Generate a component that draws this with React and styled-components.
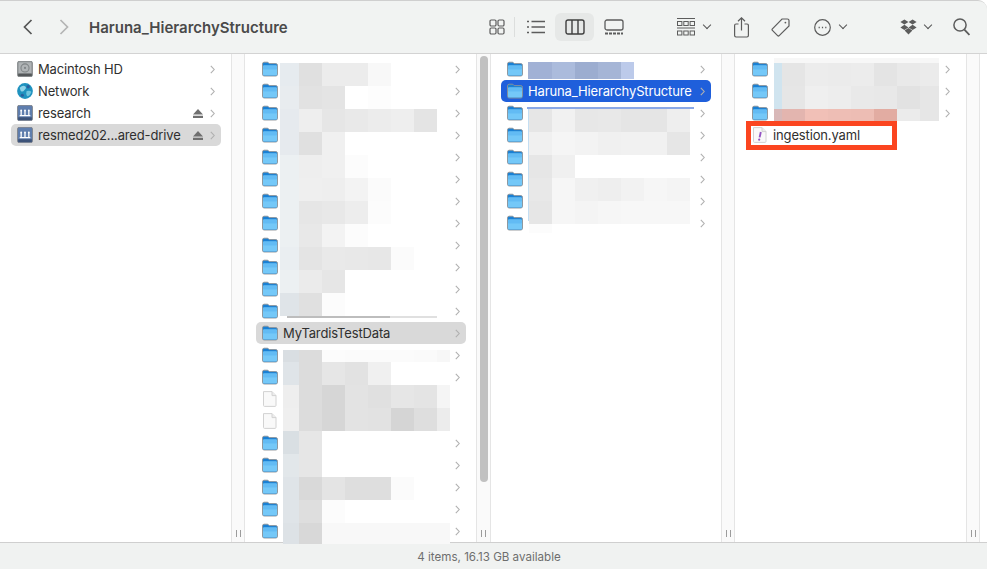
import React from "react";
import styled, { createGlobalStyle } from "styled-components";

const Global = createGlobalStyle`
  html, body { margin: 0; padding: 0; background: #fff; }
  body { font-family: "Inter", "Liberation Sans", sans-serif; }
`;

const GREY = "#5c5c5c";

const Chevron = () => (
  <ChevronWrap viewBox="0 0 5 9">
    <path d="M0.8 0.8 L4.2 4.5 L0.8 8.2" fill="none" stroke="currentColor" strokeWidth="1.1" />
  </ChevronWrap>
);

const Folder = () => (
  <IconBox viewBox="0 0 16 15">
    <path d="M0.5 2.4 Q0.5 0.7 2.2 0.7 H5.8 L7.2 2.1 H13.8 Q15.5 2.1 15.5 3.8 V12.8 Q15.5 14.5 13.8 14.5 H2.2 Q0.5 14.5 0.5 12.8 Z" fill="#1a80d4" stroke="#8f9396" strokeWidth="0.9" />
    <rect x="1" y="4" width="14" height="10" rx="1" fill="#74c8f8" />
    <rect x="1" y="4" width="14" height="4" rx="1" fill="#62bbf4" />
  </IconBox>
);

const Doc = ({ yaml }) => (
  <IconBox viewBox="0 0 16 16">
    <path d="M1.5 0.6 H10 L14 4.6 V14.4 Q14 15.4 13 15.4 H2.5 Q1.5 15.4 1.5 14.4 Z" fill="#f9f9f9" stroke="#d2d2d2" />
    <path d="M10 0.6 V4.6 H14" fill="#ececec" stroke="#d2d2d2" />
    {yaml && (
      <>
        <path d="M8.8 5 L7.6 10.4" stroke="#9454c4" strokeWidth="1.9" />
        <circle cx="7.2" cy="12.7" r="1.1" fill="#9454c4" />
      </>
    )}
  </IconBox>
);

const Disk = () => (
  <IconBox viewBox="0.5 0.5 15 15">
    <rect x="1" y="0.8" width="14" height="14.4" rx="1.5" fill="#8f9496" stroke="#6d7173" strokeWidth="0.6" />
    <rect x="2" y="1.8" width="12" height="10" fill="#b0b4b6" />
    <circle cx="8" cy="7" r="3.8" fill="none" stroke="#7f8486" />
    <circle cx="8" cy="7" r="1" fill="#7f8486" />
    <rect x="1.6" y="12.4" width="12.8" height="2.2" fill="#54585a" />
  </IconBox>
);

const Globe = () => (
  <IconBox viewBox="0.5 0.5 15 15">
    <circle cx="8" cy="8" r="7.4" fill="#1f92bf" />
    <path d="M3 5 Q6 2 8 3.5 Q10 5 7.5 7 Q6 9.5 4 8 Z" fill="#8fd3e8" />
    <path d="M9.5 8 Q13 7 14 9 Q12.5 13 10 13 Q8.5 11 9.5 8 Z" fill="#6ec4de" />
    <circle cx="11" cy="4" r="1.6" fill="#2a5f9e" />
    <circle cx="5.5" cy="12" r="1.5" fill="#2a5f9e" />
  </IconBox>
);

const Server = () => (
  <IconBox viewBox="0.5 0.5 15 15">
    <rect x="1" y="0.8" width="14" height="14.4" rx="1.6" fill="#5f7eae" stroke="#7c8086" strokeWidth="0.8" />
    <rect x="1.6" y="12" width="12.8" height="2.6" fill="#3c5278" />
    <path d="M4.4 6 V10 M8 6 V10 M11.6 6 V10 M3 10.4 H13" stroke="#fff" strokeWidth="1.2" />
    <circle cx="4.4" cy="5.6" r="0.9" fill="#fff" />
    <circle cx="8" cy="5.6" r="0.9" fill="#fff" />
    <circle cx="11.6" cy="5.6" r="0.9" fill="#fff" />
  </IconBox>
);

const Eject = () => (
  <EjectIcon viewBox="0 0 10 9">
    <path d="M5 0 L10 5.4 H0 Z M0 6.8 H10 V9 H0 Z" fill="#6f6f6f" />
  </EjectIcon>
);

const Row = ({ icon, label, sel, eject, noChevron }) => (
  <RowBox $sel={sel}>
    {icon}
    <Label>{label}</Label>
    {eject && <Eject />}
    {!noChevron && <Chevron />}
  </RowBox>
);

const Mosaic = ({ left, top, cols, rows, cells }) => (
  <MosaicGrid $left={left} $top={top} $cols={cols} $rows={rows}>
    {cells.flat().map((c, i) => (
      <Cell key={i} $c={c} />
    ))}
  </MosaicGrid>
);

const W = "#fff";
const sevenCols = "19px 23px 23px 23px 23px 23px 23px";
const eightCols = "16px 23px 23px 23px 23px 23px 23px 13px";

const upperCells = [
  ["#e6ebef", "#e0e0e0", "#ececec", "#ececec", "#f8f8f8", W, W],
  ["#e8ecef", "#e2e2e2", "#e4e4e4", W, "#fdfdfd", W, W],
  ["#e6eaee", "#eeeeee", "#e6e6e6", "#e9e9e9", "#ececec", "#eeeeee", "#e4e4e4"],
  ["#e6eaee", "#e0e0e0", "#f0f0f0", W, W, W, W],
  ["#ecf0f2", "#eeeeee", "#f0f0f0", "#fcfcfc", W, W, W],
  ["#ecf0f2", "#efefef", "#eeeeee", "#f3f3f3", "#fbfbfb", W, W],
  ["#ecf0f2", "#e6e6e6", "#e8e8e8", "#ededed", "#fcfcfc", W, W],
  ["#ecf0f2", "#e8e8e8", "#f3f3f3", "#fcfcfc", W, W, W],
  ["#eaeef1", "#e4e4e4", "#e9e9e9", "#e8e8e8", "#e7e7e7", "#fbfbfb", W],
  ["#ecf0f2", "#ebebeb", "#e6e6e6", W, W, W, W],
  ["#dfe4e8", "#e0e0e0", "#fcfcfc", W, W, W, W],
];

const lowerCells = [
  ["#d9dee2", "#dcdcdc", "#fcfcfc", "#fbfbfb", "#fbfbfb", "#fbfbfb", "#fafafa", "#f7f7f7"],
  ["#dfe4e8", "#dcdcdc", "#e6e6e6", "#e2e2e2", "#f0f0f0", W, W, W],
  ["#eeeeee", "#dcdcdc", "#d6d6d6", "#e3e3e3", "#e0e0e0", "#e6e6e6", "#e4e4e4", "#f5f5f5"],
  ["#efefef", "#dcdcdc", "#d6d6d6", "#e3e3e3", "#e2e2e2", "#d5d5d5", "#dedede", "#ececec"],
  ["#d9dfe3", "#e6e6e6", W, W, W, W, W, W],
  ["#e2e7ea", "#e6e6e6", W, W, W, W, W, W],
  ["#dfe4e8", "#d9d9d9", "#e4e4e4", "#dedede", "#dedede", "#fbfbfb", W, W],
  ["#dfe4e8", "#dedede", "#fcfcfc", W, W, W, W, W],
  ["#dde2e6", "#d8d8d8", "#f8f8f8", "#f8f8f8", "#f8f8f8", "#f8f8f8", "#f8f8f8", "#f8f8f8"],
];

const thirdTop = [["#a1b1d5", "#abbbdc", "#9cadd0", "#a5b5d6", "#bccaea"]];

const thirdCells = [
  ["#e6e6e6", "#f1f1f1", "#e7e7e7", "#e8e8e8", "#e5e5e5", "#e5e5e5", "#eeeeee"],
  ["#f0f0f0", "#f5f5f5", "#f3f3f3", "#f0f0f0", "#f1f1f1", "#f1f1f1", "#e6e6e6"],
  ["#e6e6e6", "#f0f0f0", W, W, W, W, W],
  ["#e8e8e8", "#f6f6f6", "#f0f0f0", "#eeeeee", "#f2f2f2", "#f6f6f6", "#f4f4f4"],
  ["#e6e6e6", "#f6f6f6", "#f4f4f4", "#f6f6f6", "#f7f7f7", "#f7f7f7", "#f7f7f7"],
  ["#fcfcfc", W, W, W, W, W, W],
];

const fourthCells = [
  ["#f7f7f7", "#f7f7f7", "#f7f7f7", "#f7f7f7", "#f7f7f7", "#f7f7f7", "#f7f7f7", "#f7f7f7"],
  ["#d0e4ef", "#e5e5e5", "#ececec", "#ebebeb", "#ececec", "#e4e4e4", "#e9e9e9", "#ebebeb"],
  ["#d0e4ef", "#e6e6e6", "#efefef", "#ededed", "#e9e9e9", "#e8e8e8", "#e2e2e2", "#e6e6e6"],
  ["#d8b8b8", "#e3b5af", "#f1c0b7", "#eebeb5", "#edbdb4", "#e2aca2", "#ebebeb", "#e6e6e6"],
];

const secondColumn = [
  ...Array(12).fill({ kind: "folder" }),
  { kind: "folder", label: "MyTardisTestData", sel: "grey" },
  { kind: "folder" },
  { kind: "folder" },
  { kind: "doc" },
  { kind: "doc" },
  ...Array(5).fill({ kind: "folder" }),
];

const App = () => (
  <Window>
    <Global />
    <Toolbar>
      <NavButton>
        <svg width="10" height="16" viewBox="0 0 10 16">
          <path d="M8.5 1 L1.5 8 L8.5 15" fill="none" stroke="#555" strokeWidth="1.7" />
        </svg>
      </NavButton>
      <NavButton $next>
        <svg width="10" height="16" viewBox="0 0 10 16">
          <path d="M1.5 1 L8.5 8 L1.5 15" fill="none" stroke="#b4b4b4" strokeWidth="1.7" />
        </svg>
      </NavButton>
      <Title>Haruna_HierarchyStructure</Title>
      <Tools>
        <ViewSwitcher>
          <ViewButton $divider>
            <svg width="16" height="16" viewBox="0 0 16 16" fill="none" stroke={GREY} strokeWidth="1.2">
              <rect x="1" y="1" width="6" height="6" rx="1.2" />
              <rect x="9" y="1" width="6" height="6" rx="1.2" />
              <rect x="1" y="9" width="6" height="6" rx="1.2" />
              <rect x="9" y="9" width="6" height="6" rx="1.2" />
            </svg>
          </ViewButton>
          <ViewButton>
            <svg width="18" height="14" viewBox="0 0 18 14" stroke={GREY} strokeWidth="1.4">
              <path d="M0 1.5 H2 M0 7 H2 M0 12.5 H2 M4.5 1.5 H18 M4.5 7 H18 M4.5 12.5 H18" />
            </svg>
          </ViewButton>
          <ViewButton $active>
            <svg width="20" height="16" viewBox="0 0 20 16" fill="none" stroke="#3f3f3f" strokeWidth="1.4">
              <rect x="1" y="1" width="18" height="14" rx="2" />
              <path d="M7 1 V15 M13 1 V15" />
            </svg>
          </ViewButton>
          <ViewButton>
            <svg width="20" height="16" viewBox="0 0 20 16" fill="none" stroke={GREY} strokeWidth="1.3">
              <rect x="1" y="1" width="18" height="10" rx="2" />
              <path d="M1 14.5 H19" strokeWidth="2" strokeDasharray="3 1" />
            </svg>
          </ViewButton>
        </ViewSwitcher>
        <ToolIcon $ml={44}>
          <svg width="18" height="18" viewBox="0 0 18 18" fill="none" stroke={GREY} strokeWidth="1">
            <path d="M0 0.5 H18 M0 10 H18" />
            <rect x="0.5" y="3.5" width="4.4" height="4" />
            <rect x="6.8" y="3.5" width="4.4" height="4" />
            <rect x="13.1" y="3.5" width="4.4" height="4" />
            <rect x="0.5" y="13" width="4.4" height="4" />
            <rect x="6.8" y="13" width="4.4" height="4" />
            <rect x="13.1" y="13" width="4.4" height="4" />
          </svg>
        </ToolIcon>
        <DropCaret $ml={7} />
        <ToolIcon $ml={23}>
          <svg width="15" height="21" viewBox="0 0 15 21" fill="none" stroke={GREY} strokeWidth="1.2">
            <path d="M4.5 7 H2 Q0.6 7 0.6 8.4 V18.6 Q0.6 20 2 20 H13 Q14.4 20 14.4 18.6 V8.4 Q14.4 7 13 7 H10.5" />
            <path d="M7.5 13.5 V1 M4 4.2 L7.5 0.8 L11 4.2" />
          </svg>
        </ToolIcon>
        <ToolIcon $ml={22}>
          <svg width="19" height="19" viewBox="0 0 19 19" fill="none" stroke={GREY} strokeWidth="1.2">
            <path d="M11 1 H16.4 Q18 1 18 2.6 V8 L8.2 17.6 Q7.4 18.4 6.6 17.6 L1.4 12.4 Q0.6 11.6 1.4 10.8 Z" />
            <circle cx="14.4" cy="4.6" r="0.9" fill={GREY} stroke="none" />
          </svg>
        </ToolIcon>
        <ToolIcon $ml={24}>
          <svg width="17" height="17" viewBox="0 0 17 17" fill="none" stroke={GREY} strokeWidth="1.2">
            <circle cx="8.5" cy="8.5" r="7.8" />
            <path d="M4.6 8.5 H5.8 M7.9 8.5 H9.1 M11.2 8.5 H12.4" strokeWidth="1.5" />
          </svg>
        </ToolIcon>
        <DropCaret $ml={7} />
        <ToolIcon $ml={53}>
          <svg width="17" height="16" viewBox="0 0 17 16" fill={GREY}>
            <path d="M4.4 0.5 L8.4 3 L4.4 5.6 L0.4 3 Z M12.6 0.5 L16.6 3 L12.6 5.6 L8.6 3 Z M4.4 5.8 L8.4 8.4 L4.4 11 L0.4 8.4 Z M12.6 5.8 L16.6 8.4 L12.6 11 L8.6 8.4 Z M8.5 9 L12.4 11.5 L8.5 15.6 L4.6 11.5 Z" />
          </svg>
        </ToolIcon>
        <DropCaret $ml={6} />
        <ToolIcon $ml={21}>
          <svg width="17" height="18" viewBox="0 0 17 18" fill="none" stroke={GREY} strokeWidth="1.5">
            <circle cx="7" cy="7" r="6.1" />
            <path d="M11.4 11.6 L16.4 17" strokeWidth="1.8" />
          </svg>
        </ToolIcon>
      </Tools>
    </Toolbar>
    <Browser>
      <Sidebar>
        <Row icon={<Disk />} label="Macintosh HD" />
        <Row icon={<Globe />} label="Network" />
        <Row icon={<Server />} label="research" eject />
        <Row icon={<Server />} label="resmed202...ared-drive" eject sel="grey" />
      </Sidebar>
      <Gutter />
      <Column $w={231}>
        {secondColumn.map((r, i) =>
          r.kind === "folder" ? (
            <Row key={i} icon={<Folder />} label={r.label} sel={r.sel} />
          ) : (
            <Row key={i} icon={<Doc />} noChevron />
          )
        )}
        <Mosaic left={35} top={9} cols={sevenCols} rows="repeat(11, 23px)" cells={upperCells} />
        <Streak $left={42} $top={262} $w={150} $bg="linear-gradient(to right, #bdbdbd 69%, #e0e0e0 69%)" />
        <Mosaic left={38} top={296} cols={eightCols} rows="12px repeat(7, 23px) 21px" cells={lowerCells} />
      </Column>
      <Gutter $thumb $w={15} />
      <Column $w={230} $inset={10}>
        <Row icon={<Folder />} />
        <Row icon={<Folder />} label="Haruna_HierarchyStructure" sel="blue" />
        {Array.from({ length: 6 }, (_, i) => (
          <Row key={i} icon={<Folder />} />
        ))}
        <Mosaic left={37} top={8} cols="24px 23px 23px 23px 13px" rows="17px" cells={thirdTop} />
        <Streak $left={36} $top={53} $w={167} $bg="#8aa8e6" />
        <Streak $left={37} $top={55} $w={2} $h={112} $bg="#c4def2" />
        <Mosaic left={38} top={55} cols="23px 23px 23px 23px 23px 23px 23px" rows="repeat(5, 23px) 9px" cells={thirdCells} />
      </Column>
      <Gutter />
      <Column $w={231}>
        <Row icon={<Folder />} />
        <Row icon={<Folder />} />
        <Row icon={<Folder />} />
        <ReviewedRow>
          <Row icon={<Doc yaml />} label="ingestion.yaml" noChevron />
          <RedBox />
        </ReviewedRow>
        <Mosaic left={39} top={4} cols="8px 23px 23px 23px 23px 23px 23px 19px" rows="5px 23px 23px 12px" cells={fourthCells} />
      </Column>
      <Gutter />
      <Filler />
    </Browser>
    <StatusBar>4 items, 16.13 GB available</StatusBar>
  </Window>
);

export default App;

const Window = styled.div`
  width: 987px;
  height: 569px;
  display: flex;
  flex-direction: column;
  overflow: hidden;
  background: #fff;
  color: #2f2f2f;
`;

const Toolbar = styled.div`
  flex: 0 0 54px;
  box-sizing: border-box;
  display: flex;
  align-items: center;
  padding-left: 14px;
  background: #f1f3f2;
  border-top: 1px solid #cfcfcf;
  border-bottom: 1px solid #d3d3d3;
  border-top-right-radius: 9px;
`;

const NavButton = styled.div`
  width: 28px;
  height: 28px;
  display: flex;
  align-items: center;
  justify-content: center;
  margin-left: ${(p) => (p.$next ? "8px" : "0")};
`;

const Title = styled.div`
  margin-left: 11px;
  font-size: 15px;
  font-weight: 600;
  color: #4a4a4a;
  white-space: nowrap;
`;

const Tools = styled.div`
  margin-left: auto;
  padding-right: 17px;
  display: flex;
  align-items: center;
`;

const ViewSwitcher = styled.div`
  display: flex;
`;

const ViewButton = styled.div`
  position: relative;
  width: 39px;
  height: 28px;
  display: flex;
  align-items: center;
  justify-content: center;
  border-radius: 6px;
  background: ${(p) => (p.$active ? "#e6e8e7" : "transparent")};
  ${(p) =>
    p.$divider &&
    `&::after {
      content: "";
      position: absolute;
      right: 1px;
      top: 4px;
      height: 20px;
      width: 1px;
      background: #dcdedd;
    }`}
`;

const ToolIcon = styled.div`
  display: flex;
  align-items: center;
  margin-left: ${(p) => p.$ml}px;
`;

const DropCaret = styled.div`
  position: relative;
  width: 9px;
  height: 6px;
  margin-left: ${(p) => p.$ml}px;
  &::before {
    content: "";
    position: absolute;
    left: 1.5px;
    top: -2.5px;
    width: 5px;
    height: 5px;
    border-right: 1.7px solid #555;
    border-bottom: 1.7px solid #555;
    transform: rotate(45deg);
  }
`;

const Browser = styled.div`
  flex: 1;
  min-height: 0;
  display: flex;
`;

const Sidebar = styled.div`
  position: relative;
  flex: 0 0 231px;
  box-sizing: border-box;
  padding-top: 4px;
  background: #fff;
`;

const Column = styled.div`
  position: relative;
  flex: 0 0 ${(p) => p.$w}px;
  box-sizing: border-box;
  padding-top: 4px;
  --inset: ${(p) => p.$inset ?? 11}px;
  background: #fff;
`;

const Filler = styled.div`
  flex: 1;
  background: #fff;
`;

const Gutter = styled.div`
  position: relative;
  flex: 0 0 ${(p) => p.$w ?? 14}px;
  box-sizing: border-box;
  background: #fafafa;
  border-left: 1px solid #e5e5e5;
  border-right: 1px solid #e5e5e5;
  &::before {
    content: "";
    position: absolute;
    left: 4px;
    bottom: 5px;
    width: 5px;
    height: 7px;
    border-left: 1px solid #9c9c9c;
    border-right: 1px solid #9c9c9c;
    box-sizing: border-box;
  }
  ${(p) =>
    p.$thumb &&
    `&::after {
      content: "";
      position: absolute;
      left: 3px;
      top: 2px;
      width: 8px;
      height: 426px;
      border-radius: 4px;
      background: #c1c1c1;
    }`}
`;

const RowBox = styled.div`
  height: 22px;
  margin: 0 10px 0 var(--inset, 11px);
  padding: 0 6px;
  display: flex;
  align-items: center;
  border-radius: 5px;
  font-size: 13px;
  letter-spacing: -0.14px;
  background: ${(p) =>
    p.$sel === "blue" ? "#1f5fdb" : p.$sel === "grey" ? "#d9d9d9" : "transparent"};
  color: ${(p) => (p.$sel === "blue" ? "#fff" : "#2f2f2f")};
`;

const IconBox = styled.svg`
  flex: 0 0 16px;
  width: 16px;
  height: 16px;
`;

const Label = styled.span`
  margin-left: 5px;
  white-space: nowrap;
`;

const EjectIcon = styled.svg`
  width: 10px;
  height: 9px;
  margin-left: auto;
  margin-right: 7px;
`;

const ChevronWrap = styled.svg`
  flex: 0 0 5px;
  width: 5px;
  height: 9px;
  margin-left: auto;
  color: #b0b0b0;
  ${EjectIcon} + & {
    margin-left: 0;
  }
`;

const MosaicGrid = styled.div`
  position: absolute;
  left: ${(p) => p.$left}px;
  top: ${(p) => p.$top}px;
  display: grid;
  grid-template-columns: ${(p) => p.$cols};
  grid-template-rows: ${(p) => p.$rows};
`;

const Cell = styled.div`
  background: ${(p) => p.$c};
`;

const Streak = styled.div`
  position: absolute;
  left: ${(p) => p.$left}px;
  top: ${(p) => p.$top}px;
  width: ${(p) => p.$w}px;
  height: ${(p) => p.$h ?? 2}px;
  background: ${(p) => p.$bg};
`;

const ReviewedRow = styled.div`
  position: relative;
`;

const RedBox = styled.div`
  position: absolute;
  left: 11px;
  top: -3px;
  width: 151px;
  height: 29px;
  box-sizing: border-box;
  border: 5px solid #fb4520;
  pointer-events: none;
`;

const StatusBar = styled.div`
  flex: 0 0 27px;
  box-sizing: border-box;
  display: flex;
  align-items: center;
  justify-content: center;
  padding: 1px 9px 0 0;
  background: #f0f2f1;
  border-top: 1px solid #cfcfcf;
  font-size: 11.6px;
  color: #6e6e6e;
`;
